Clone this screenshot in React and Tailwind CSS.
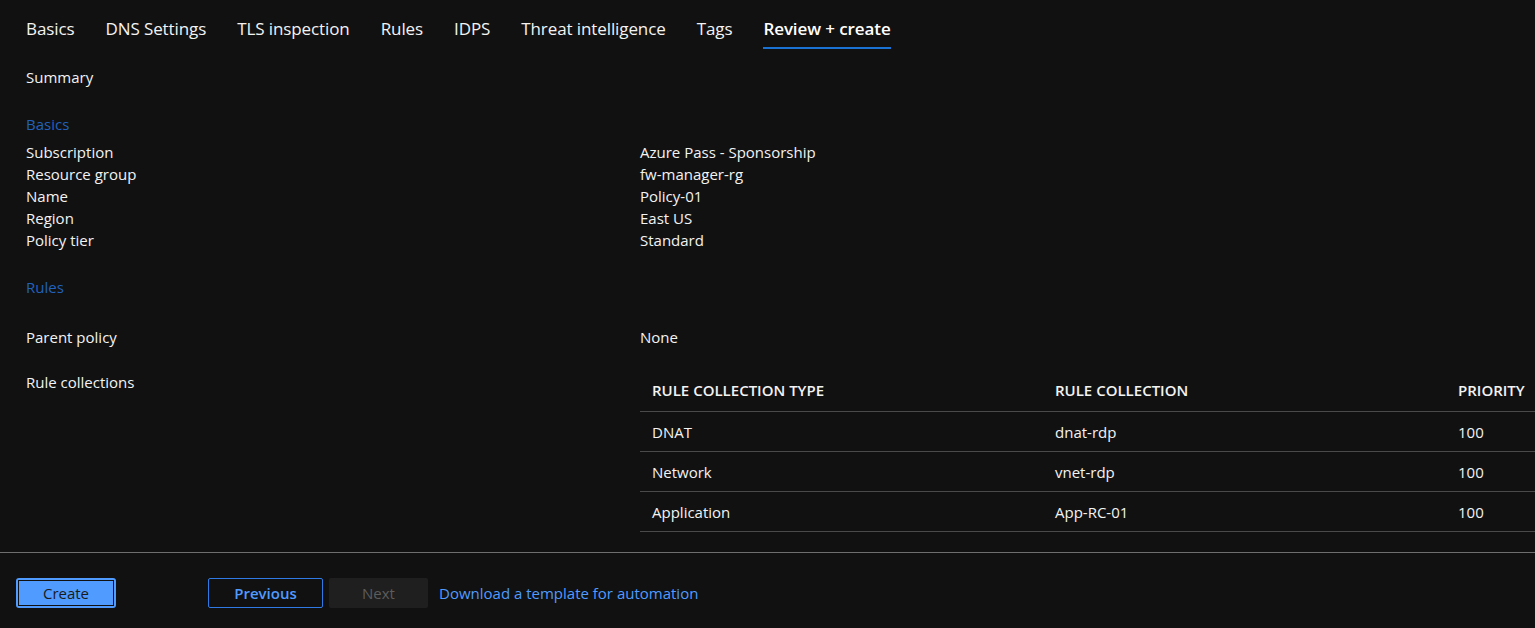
import React from 'react';

const tabs = ['Basics', 'DNS Settings', 'TLS inspection', 'Rules', 'IDPS', 'Threat intelligence', 'Tags', 'Review + create'];

const basics = [
    ['Subscription', 'Azure Pass - Sponsorship'],
    ['Resource group', 'fw-manager-rg'],
    ['Name', 'Policy-01'],
    ['Region', 'East US'],
    ['Policy tier', 'Standard'],
];

const collections = [
    ['DNAT', 'dnat-rdp', '100'],
    ['Network', 'vnet-rdp', '100'],
    ['Application', 'App-RC-01', '100'],
];

const App = () => {
    return (
        <div
            className="w-[1535px] h-[628px] overflow-hidden bg-[#111111] text-[#f3f3f3] flex flex-col"
            style={{ fontFamily: '"Segoe UI", "Open Sans", "Noto Sans", sans-serif' }}
        >
            {/* Tabs */}
            <nav className="flex px-[26px] gap-[31px] shrink-0">
                {tabs.map((tab, i) => {
                    const active = i === tabs.length - 1;
                    return (
                        <div
                            key={tab}
                            className={`pt-[18px] pb-[7px] border-b-2 text-[17px] leading-[22px] tracking-[-0.1px] ${active
                                ? 'border-[#1a73d4] font-semibold text-white'
                                : 'border-transparent'
                                }`}
                        >
                            {tab}
                        </div>
                    );
                })}
            </nav>

            <div className="flex-1 px-[26px] text-[15px] leading-[22px]">
                <div className="mt-[17px]">Summary</div>

                {/* Basics */}
                <div className="mt-[25px] text-[#2161bd]">Basics</div>
                <div className="mt-[6px]">
                    {basics.map(([label, value]) => (
                        <div key={label} className="flex">
                            <div className="w-[614px] shrink-0">{label}</div>
                            <div>{value}</div>
                        </div>
                    ))}
                </div>

                {/* Rules */}
                <div className="mt-[25px] text-[#2161bd]">Rules</div>
                <div className="mt-[28px] flex">
                    <div className="w-[614px] shrink-0">Parent policy</div>
                    <div>None</div>
                </div>

                <div className="mt-[23px] flex">
                    <div className="w-[614px] shrink-0">Rule collections</div>
                    <div className="w-[1209px] shrink-0">
                        <div className="grid grid-cols-3 h-[41px] pb-[2px] items-center border-b border-[#4a4a4a] font-semibold text-[15px]">
                            <div className="px-3">RULE COLLECTION TYPE</div>
                            <div className="px-3">RULE COLLECTION</div>
                            <div className="px-3">PRIORITY</div>
                        </div>
                        {collections.map(([type, name, priority]) => (
                            <div key={type} className="grid grid-cols-3 h-[40px] items-center border-b border-[#4a4a4a]">
                                <div className="px-3">{type}</div>
                                <div className="px-3">{name}</div>
                                <div className="px-3">{priority}</div>
                            </div>
                        ))}
                    </div>
                </div>
            </div>

            {/* Footer */}
            <div className="shrink-0 border-t border-[#6e6e6e] h-[76px] flex items-start pt-[25px] px-4 text-[15px]">
                <button className="w-[100px] h-[30px] rounded-[3px] border-2 border-[#4f9bff] bg-[#4f9bff] p-0">
                    <div className="h-full w-full border border-[#111111] flex items-center justify-center text-[#1b1b1b]">
                        Create
                    </div>
                </button>
                <button className="ml-[92px] w-[115px] h-[30px] rounded-[2px] border border-[#2f7ae5] text-[#4f9bff] font-semibold">
                    Previous
                </button>
                <button className="ml-[6px] w-[99px] h-[30px] rounded-[2px] bg-[#1f1f1f] text-[#5c5c5c]">
                    Next
                </button>
                <a className="ml-[11px] h-[30px] flex items-center text-[#4f9bff] cursor-pointer">Download a template for automation</a>
            </div>
        </div>
    );
};

export default App;
